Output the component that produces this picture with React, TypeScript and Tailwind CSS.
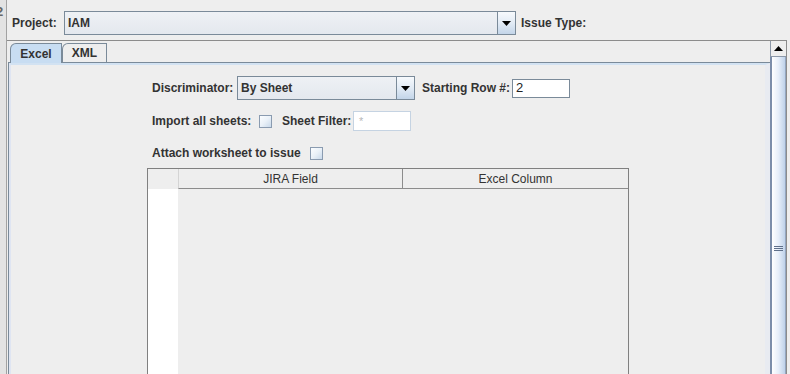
import React from 'react';

const FONT = "font-['Liberation_Sans',Arial,sans-serif]";

const DownArrow = () => (
  <div className="w-[18px] h-full shrink-0 border-l border-[#7a8a99] bg-gradient-to-b from-[#f7fafd] via-[#e2ebf5] to-[#c3d5e9] flex items-center justify-center">
    <svg width="9" height="5" viewBox="0 0 9 5">
      <path d="M0 0H9L4.5 5Z" fill="#000" />
    </svg>
  </div>
);

const Combo = ({ width, text }: { width: string; text: string }) => (
  <div className={`${width} h-[24px] flex border border-[#7a8a99] bg-gradient-to-b from-[#eef1f5] to-[#e4e8ee]`}>
    <div className="flex-1 flex items-center pl-[3px] font-bold text-[#333]">{text}</div>
    <DownArrow />
  </div>
);

const Check = () => (
  <div className="w-[13px] h-[13px] shrink-0 border border-[#8a9bb0] bg-gradient-to-br from-[#fbfdff] via-[#eaf1f8] to-[#c9d9ea]" />
);

export default function App() {
  return (
    <div className={`w-[790px] h-[374px] overflow-hidden bg-[#eeeeee] flex ${FONT} text-[12px] text-[#333333]`}>
      {/* left edge of neighbouring panel */}
      <div className="w-[7px] shrink-0 bg-[#e3e3e3] border-r border-[#a2a2a2] overflow-hidden">
        <div className="-ml-[4px] mt-[5px] text-[13px] leading-none text-[#666] font-bold">2</div>
      </div>

      <div className="w-[780px] shrink-0 flex flex-col">
        {/* project row */}
        <div className="h-[40px] shrink-0 flex items-start pt-[11px] pl-[5px]">
          <div className="w-[52px] h-[24px] flex items-center font-bold">Project:</div>
          <Combo width="w-[452px]" text="IAM" />
          <div className="ml-[5px] h-[24px] flex items-center font-bold">Issue Type:</div>
        </div>

        {/* scroll pane */}
        <div className="flex-1 min-h-0 flex border-t border-r border-[#8c8c8c]">
          <div className="w-[763px] flex flex-col pl-[1px]">
            {/* tabs */}
            <div className="h-[21px] shrink-0 pt-[2px] pl-[2px] flex items-start">
              <div className="relative z-10 w-[52px] h-[20px] bg-[#c8ddf2] border border-b-0 border-[#7a8a99] rounded-tl-[6px] flex items-center justify-center font-bold">
                Excel
              </div>
              <div className="w-[45px] h-[19px] bg-[#eeeeee] border border-b-0 border-[#7a8a99] rounded-tl-[6px] flex items-center justify-center font-bold">
                XML
              </div>
            </div>

            {/* tab content */}
            <div className="flex-1 min-h-0 border-t border-l border-[#7a8a99]">
              <div className="h-full flex flex-col border-t-[2px] border-l-[2px] border-r-[5px] border-t-[#d2e2f2] border-l-[#dfe5f2] border-r-[#e8ebf1] pl-[136px]">
                {/* discriminator row */}
                <div className="mt-[11px] ml-[5px] h-[24px] flex items-center">
                  <div className="w-[85px] font-bold">Discriminator:</div>
                  <Combo width="w-[178px]" text="By Sheet" />
                  <div className="ml-[7px] w-[90px] font-bold">Starting Row #:</div>
                  <div className="w-[58px] h-[19px] bg-white border border-[#7a8a99] flex items-center pl-[3px] text-[13px] text-[#222]">
                    2
                  </div>
                </div>

                {/* import row */}
                <div className="mt-[11px] ml-[5px] h-[20px] flex items-center">
                  <div className="w-[107px] font-bold">Import all sheets:</div>
                  <Check />
                  <div className="ml-[10px] w-[71px] font-bold">Sheet Filter:</div>
                  <div className="w-[58px] h-[20px] bg-white border border-[#c5d3e2] flex items-center pl-[5px] text-[11px] text-[#b8b8b8]">
                    *
                  </div>
                </div>

                {/* attach row */}
                <div className="mt-[14px] ml-[5px] h-[16px] flex items-center">
                  <div className="w-[158px] font-bold">Attach worksheet to issue</div>
                  <Check />
                </div>

                {/* mapping table */}
                <div className="mt-[7px] w-[482px] flex-1 flex flex-col border-t border-l border-r border-[#808080]">
                  <div className="h-[20px] shrink-0 flex">
                    <div className="w-[30px] bg-[#eeeeee]" />
                    <div className="w-[225px] flex items-center justify-center border-l border-l-[#d4d4d4] border-r border-r-[#8c8c8c] border-b border-b-[#8c8c8c] bg-[#eeeeee]">
                      JIRA Field
                    </div>
                    <div className="flex-1 flex items-center justify-center border-b border-[#8c8c8c] bg-[#eeeeee]">
                      Excel Column
                    </div>
                  </div>
                  <div className="flex-1 flex">
                    <div className="w-[30px] bg-white" />
                    <div className="flex-1 bg-[#eeeeee]" />
                  </div>
                </div>
              </div>
            </div>
          </div>

          {/* vertical scrollbar */}
          <div className="w-[16px] flex flex-col">
            <div className="h-[16px] shrink-0 bg-[#eeeeee] border-l border-b border-[#8c98a8] flex items-center justify-center">
              <svg width="9" height="5" viewBox="0 0 9 5">
                <path d="M0 5H9L4.5 0Z" fill="#000" />
              </svg>
            </div>
            <div className="flex-1 border-l-2 border-[#7c8eaa] border-r border-r-[#94a6c0] bg-gradient-to-r from-[#ffffff] via-[#e6eef9] to-[#bfd2ea] flex flex-col items-center pt-[189px]">
              <div className="w-[9px] flex flex-col gap-[1px]">
                <div className="h-[1px] bg-[#5f708a]" />
                <div className="h-[1px] bg-[#5f708a]" />
                <div className="h-[1px] bg-[#5f708a]" />
              </div>
            </div>
          </div>
        </div>
      </div>
    </div>
  );
}
